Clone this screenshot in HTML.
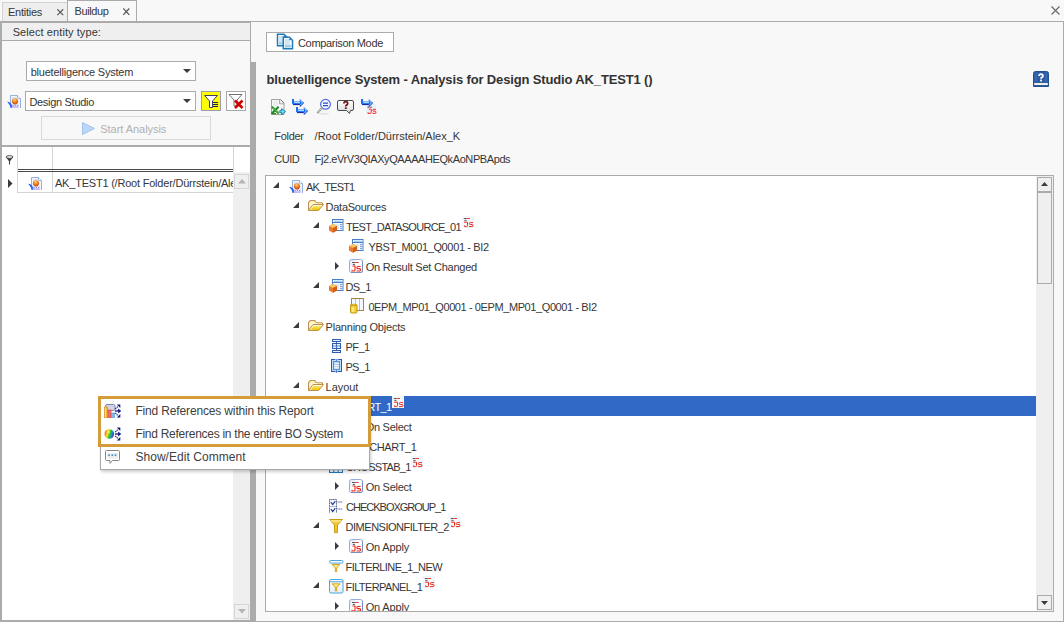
<!DOCTYPE html>
<html><head><meta charset="utf-8"><title>Buildup</title>
<style>
html,body{margin:0;padding:0;}
body{width:1064px;height:622px;overflow:hidden;position:relative;background:#f8f8f8;font-family:"Liberation Sans", sans-serif;}
div,svg{box-sizing:border-box;}
</style></head><body>
<div style="position:absolute;left:2px;top:2px;width:66px;height:20px;background:#eeeeee;box-sizing:border-box;border:1px solid #d2d2d2;"></div>
<div style="position:absolute;left:8px;top:6px;font-size:11px;line-height:13px;color:#363636;letter-spacing:-0.260px;white-space:nowrap;">Entities</div>
<svg style="position:absolute;left:57px;top:9px;" width="7" height="7" viewBox="0 0 7 7"><path d="M0.3 0.3 L6.2 6.2 M6.2 0.3 L0.3 6.2" stroke="#555" stroke-width="1.2"/></svg>
<div style="position:absolute;left:67px;top:0px;width:70px;height:22px;background:#f8f8f8;box-sizing:border-box;border:1px solid #ababab;"></div>
<div style="position:absolute;left:74.5px;top:5px;font-size:11px;line-height:13px;color:#363636;letter-spacing:-0.386px;white-space:nowrap;">Buildup</div>
<svg style="position:absolute;left:123px;top:8px;" width="7" height="8" viewBox="0 0 7 8"><path d="M0.3 0.5 L6.3 6.8 M6.3 0.5 L0.3 6.8" stroke="#555" stroke-width="1.2"/></svg>
<svg style="position:absolute;left:1051px;top:6px;" width="9" height="9" viewBox="0 0 9 9"><path d="M0.5 0.5 L8.5 8.5 M8.5 0.5 L0.5 8.5" stroke="#6a6a6a" stroke-width="1.2"/></svg>
<div style="position:absolute;left:0px;top:21px;width:1064px;height:1px;background:#ababab;"></div>
<div style="position:absolute;left:0px;top:21px;width:2px;height:601px;background:#ababab;"></div>
<div style="position:absolute;left:0px;top:22px;width:250px;height:1px;background:#ababab;"></div>
<div style="position:absolute;left:2px;top:23px;width:248px;height:17px;background:#efefef;"></div>
<div style="position:absolute;left:2px;top:40px;width:248px;height:1px;background:#ababab;"></div>
<div style="position:absolute;left:12.7px;top:26px;font-size:11px;line-height:13px;color:#363636;letter-spacing:0.077px;white-space:nowrap;">Select entity type:</div>
<div style="position:absolute;left:250px;top:21px;width:1px;height:41px;background:#ababab;"></div>
<div style="position:absolute;left:26px;top:61px;width:170px;height:20px;background:#ffffff;box-sizing:border-box;border:1px solid #ababab;"></div>
<div style="position:absolute;left:30.7px;top:66px;font-size:11px;line-height:13px;color:#363636;letter-spacing:-0.215px;white-space:nowrap;">bluetelligence System</div>
<svg style="position:absolute;left:183px;top:69px;" width="8" height="4" viewBox="0 0 8 4"><path d="M0 0 H8 L4 4 Z" fill="#3c3c3c"/></svg>
<div style="position:absolute;left:25px;top:91px;width:171px;height:20px;background:#ffffff;box-sizing:border-box;border:1px solid #ababab;"></div>
<div style="position:absolute;left:29.4px;top:96px;font-size:11px;line-height:13px;color:#363636;letter-spacing:-0.300px;white-space:nowrap;">Design Studio</div>
<svg style="position:absolute;left:183px;top:99px;" width="8" height="4" viewBox="0 0 8 4"><path d="M0 0 H8 L4 4 Z" fill="#3c3c3c"/></svg>
<svg style="position:absolute;left:7px;top:94px;" width="14" height="14" viewBox="0 0 14 14"><defs><radialGradient id="gor" cx="0.45" cy="0.3" r="0.7"><stop offset="0" stop-color="#ffd870"/><stop offset="0.45" stop-color="#f08a30"/><stop offset="1" stop-color="#c04810"/></radialGradient></defs>
<path d="M3.5 1.5 H10.5 L13.5 4.5 V14.5 H3.5 Z" fill="#f2f6fc" stroke="#98b0dc"/>
<path d="M10.5 1.5 V3.5 Q10.5 4.5 11.5 4.5 H13.5" fill="#ffffff" stroke="#98b0dc"/>
<rect x="5" y="3" width="5" height="2" fill="#dde6f6"/>
<path d="M5.5 10.8 L6.8 12.6 M6.8 10.8 L5.5 12.6 M7.8 10.8 L9.1 12.6 M9.1 10.8 L7.8 12.6 M10 10.8 L11.3 12.6 M11.3 10.8 L10 12.6" stroke="#9a7ef0" stroke-width="0.9"/>
<path d="M5 13.5 H11.5" stroke="#c8baf8" stroke-width="1"/>
<circle cx="8" cy="7.3" r="3.1" fill="url(#gor)"/>
<path d="M0.2 7.8 Q3.6 8 4.8 11 Q5.2 12.8 4.4 14.8 Q3.4 11.4 0.2 7.8 Z" fill="#1a60f0"/></svg>
<div style="position:absolute;left:201px;top:91px;width:20px;height:20px;background:#ffff00;box-sizing:border-box;border:1px solid #9a9ab0;"></div>
<svg style="position:absolute;left:201px;top:91px;" width="20" height="20" viewBox="0 0 20 20"><path d="M3.5 4.5 H16.5 L11.5 10 V16.5 H8.5 V10 Z" fill="#fff" stroke="#404060"/><path d="M12 11.5 H17 M12 13.5 H17 M12 15.5 H17" stroke="#202040" stroke-width="1.2"/></svg>
<div style="position:absolute;left:226px;top:91px;width:20px;height:20px;background:#ffffff;box-sizing:border-box;border:1px solid #a8a8a8;"></div>
<svg style="position:absolute;left:226px;top:91px;" width="20" height="20" viewBox="0 0 20 20"><path d="M3 3.5 H16 L11 9 V15 H8 V9 Z" fill="none" stroke="#707070"/><path d="M9 9.5 L16.5 17 M16.5 9.5 L9 17" stroke="#d00000" stroke-width="2.6"/></svg>
<div style="position:absolute;left:41px;top:116px;width:170px;height:24px;box-sizing:border-box;border:1px solid #d8d8d8;"></div>
<svg style="position:absolute;left:82px;top:122px;" width="13" height="13" viewBox="0 0 13 13"><path d="M0.5 0.5 L12.5 6.5 L0.5 12.5 Z" fill="#bcd6f6" stroke="#a4c2ee"/></svg>
<div style="position:absolute;left:100.3px;top:123px;font-size:11px;line-height:13px;color:#b0b0b0;letter-spacing:-0.046px;white-space:nowrap;">Start Analysis</div>
<div style="position:absolute;left:2px;top:145px;width:248px;height:2px;background:#ababab;"></div>
<div style="position:absolute;left:250px;top:62px;width:6px;height:560px;background:#ababab;"></div>
<div style="position:absolute;left:0px;top:620px;width:250px;height:2px;background:#ababab;"></div>
<div style="position:absolute;left:2px;top:147px;width:248px;height:473px;background:#ffffff;"></div>
<svg style="position:absolute;left:5px;top:155px;" width="9" height="10" viewBox="0 0 9 10"><path d="M1 2.2 Q4.5 4.5 8 2.2 L5 6.2 V9.6 H4 V6.2 Z" fill="#3a3a3a"/><ellipse cx="4.5" cy="2" rx="3.6" ry="1.3" fill="#fff" stroke="#3a3a3a" stroke-width="0.9"/></svg>
<div style="position:absolute;left:17px;top:147px;width:1px;height:46px;background:#d4d4d4;"></div>
<div style="position:absolute;left:52px;top:147px;width:1px;height:46px;background:#d4d4d4;"></div>
<div style="position:absolute;left:233px;top:147px;width:1px;height:25px;background:#d4d4d4;"></div>
<div style="position:absolute;left:18px;top:169px;width:215px;height:1px;background:#4a4a4a;"></div>
<div style="position:absolute;left:18px;top:171px;width:215px;height:1px;background:#4a4a4a;"></div>
<div style="position:absolute;left:17px;top:192px;width:216px;height:1px;background:#d4d4d4;"></div>
<svg style="position:absolute;left:8px;top:179px;" width="5" height="9" viewBox="0 0 5 9"><path d="M0 0 L4.5 4.5 L0 9 Z" fill="#3a3a3a"/></svg>
<svg style="position:absolute;left:28px;top:176px;" width="14" height="14" viewBox="0 0 14 14"><defs><radialGradient id="gor" cx="0.45" cy="0.3" r="0.7"><stop offset="0" stop-color="#ffd870"/><stop offset="0.45" stop-color="#f08a30"/><stop offset="1" stop-color="#c04810"/></radialGradient></defs>
<path d="M3.5 1.5 H10.5 L13.5 4.5 V14.5 H3.5 Z" fill="#f2f6fc" stroke="#98b0dc"/>
<path d="M10.5 1.5 V3.5 Q10.5 4.5 11.5 4.5 H13.5" fill="#ffffff" stroke="#98b0dc"/>
<rect x="5" y="3" width="5" height="2" fill="#dde6f6"/>
<path d="M5.5 10.8 L6.8 12.6 M6.8 10.8 L5.5 12.6 M7.8 10.8 L9.1 12.6 M9.1 10.8 L7.8 12.6 M10 10.8 L11.3 12.6 M11.3 10.8 L10 12.6" stroke="#9a7ef0" stroke-width="0.9"/>
<path d="M5 13.5 H11.5" stroke="#c8baf8" stroke-width="1"/>
<circle cx="8" cy="7.3" r="3.1" fill="url(#gor)"/>
<path d="M0.2 7.8 Q3.6 8 4.8 11 Q5.2 12.8 4.4 14.8 Q3.4 11.4 0.2 7.8 Z" fill="#1a60f0"/></svg>
<div style="position:absolute;left:55px;top:177px;font-size:11px;line-height:13px;color:#363636;letter-spacing:-0.213px;white-space:nowrap;width:178px;overflow:hidden;">AK_TEST1 (/Root Folder/Dürrstein/Alex_K)</div>
<div style="position:absolute;left:233px;top:172px;width:17px;height:448px;background:#efefef;"></div>
<div style="position:absolute;left:234px;top:174px;width:15px;height:15px;box-sizing:border-box;border:1px solid #d6d6d6;"></div>
<svg style="position:absolute;left:238px;top:179px;" width="8" height="5" viewBox="0 0 8 5"><path d="M0 4.5 L4 0 L8 4.5 Z" fill="#b4b4b4"/></svg>
<div style="position:absolute;left:234px;top:604px;width:15px;height:15px;box-sizing:border-box;border:1px solid #d6d6d6;"></div>
<svg style="position:absolute;left:238px;top:609px;" width="8" height="5" viewBox="0 0 8 5"><path d="M0 0 L8 0 L4 4.5 Z" fill="#b4b4b4"/></svg>
<div style="position:absolute;left:1063px;top:21px;width:1px;height:601px;background:#ababab;"></div>
<div style="position:absolute;left:256px;top:621px;width:807px;height:1px;background:#ababab;"></div>
<div style="position:absolute;left:266px;top:32px;width:128px;height:20px;background:#ffffff;box-sizing:border-box;border:1px solid #ababab;"></div>
<svg style="position:absolute;left:276px;top:33px;" width="18" height="17" viewBox="0 0 18 17"><path d="M1.5 1.2 H8 L11 4.2 V12.8 H1.5 Z" fill="#fff" stroke="#1f7ab8" stroke-width="1.5"/>
<rect x="3" y="3" width="5" height="8.5" fill="#d0e6f4"/><rect x="3" y="9" width="7" height="2.5" fill="#a8cfe6"/><circle cx="8.6" cy="3.4" r="0.9" fill="#1f7ab8"/>
<path d="M7.3 4.2 H13.5 L16.5 7.2 V15.8 H7.3 Z" fill="#fff" stroke="#1f7ab8" stroke-width="1.5"/>
<rect x="8.8" y="6" width="5" height="8.5" fill="#d0e6f4"/><rect x="8.8" y="12" width="6.5" height="2.5" fill="#a8cfe6"/><circle cx="14" cy="6.4" r="0.9" fill="#1f7ab8"/></svg>
<div style="position:absolute;left:298px;top:37px;font-size:11px;line-height:13px;color:#363636;letter-spacing:-0.325px;white-space:nowrap;">Comparison Mode</div>
<div style="position:absolute;left:266.5px;top:72px;font-size:13px;line-height:15px;color:#333333;font-weight:bold;letter-spacing:-0.144px;white-space:nowrap;">bluetelligence System - Analysis for Design Studio AK_TEST1 ()</div>
<svg style="position:absolute;left:1033px;top:71px;" width="16" height="16" viewBox="0 0 16 16"><path d="M2.5 0.5 H13.5 Q15.5 0.5 15.5 2.5 V15.5 H0.5 V2.5 Q0.5 0.5 2.5 0.5 Z" fill="#2f5ca6" stroke="#23508f"/><path d="M3 1.5 V11 M13 1.5 V11" stroke="#4a78c0" stroke-width="0.8"/><rect x="1.2" y="12" width="13.6" height="2" fill="#f2f0e4"/><path d="M6.1 4.9 Q6.1 3.2 8 3.2 Q9.9 3.2 9.9 4.9 Q9.9 6 8.6 6.5 Q8 6.8 8 7.8" fill="none" stroke="#fff" stroke-width="1.8"/><rect x="7.1" y="8.6" width="1.8" height="1.8" fill="#fff"/></svg>
<svg style="position:absolute;left:270px;top:98px;" width="17" height="18" viewBox="0 0 17 18"><path d="M1.5 1.5 H10.5 L14 5 V16.5 H1.5 Z" fill="#f8f8f8" stroke="#a0a0a0"/>
<path d="M9.5 1.5 V5.8 H14" fill="#eeeeee" stroke="#a8a8a8"/><path d="M10.5 1.5 L14 5" stroke="#707070"/>
<rect x="3" y="3" width="5" height="5" fill="#ececec"/>
<path d="M2 8.8 L8.8 15.6 M8.6 8.8 L1.8 15.6" stroke="#1c8a1c" stroke-width="2.1"/><path d="M3 9.6 L8.8 15.2" stroke="#a8e890" stroke-width="0.7"/>
<path d="M1.2 15.6 H6" stroke="#1c8a1c" stroke-width="1.2"/>
<path d="M9.8 12.6 H11.6 V10.6 L15.6 13.6 L11.6 16.6 V14.6 H9.8 Z" fill="#6ee6f8" stroke="#1470b0" stroke-width="0.9"/></svg>
<svg style="position:absolute;left:291px;top:98px;" width="18" height="17" viewBox="0 0 18 17"><path d="M1 1 H3 V3.6 H8.8 V1 L12.8 4.8 L8.8 8.6 V6.6 H2 L1 5.6 Z" fill="#1a6ef4"/><path d="M2 6.6 H8.8 M8.8 8.6 L12.8 4.8" stroke="#0624a0" stroke-width="1"/><path d="M3.2 4.6 H9" stroke="#d8f4ff" stroke-width="0.9"/><path d="M9.6 2.6 L11.4 4.8 L9.6 7" fill="none" stroke="#c8ecff" stroke-width="0.8"/><g transform="translate(4,8)"><path d="M1 1 H3 V3.6 H8.8 V1 L12.8 4.8 L8.8 8.6 V6.6 H2 L1 5.6 Z" fill="#1a6ef4"/><path d="M2 6.6 H8.8 M8.8 8.6 L12.8 4.8" stroke="#0624a0" stroke-width="1"/><path d="M3.2 4.6 H9" stroke="#d8f4ff" stroke-width="0.9"/><path d="M9.6 2.6 L11.4 4.8 L9.6 7" fill="none" stroke="#c8ecff" stroke-width="0.8"/></g></svg>
<svg style="position:absolute;left:316px;top:98px;" width="16" height="18" viewBox="0 0 16 18"><ellipse cx="8" cy="15.8" rx="5" ry="1" fill="#000" opacity="0.08"/>
<circle cx="9.5" cy="6.3" r="4.9" fill="#f6f9ff" stroke="#4a6ee4" stroke-width="1.2"/>
<path d="M7 5.2 H12 M7 7.6 H12" stroke="#2848c8" stroke-width="1.2"/>
<path d="M6 10 L1.8 14.4" stroke="#9a9a9a" stroke-width="2.1" stroke-linecap="round"/><path d="M5.6 10.4 L2 14.2" stroke="#e0e0e0" stroke-width="0.8"/></svg>
<svg style="position:absolute;left:337px;top:99px;" width="18" height="16" viewBox="0 0 18 16"><defs><linearGradient id="gq" x1="0" y1="0" x2="0" y2="1"><stop offset="0" stop-color="#ffffff"/><stop offset="1" stop-color="#d8d8d8"/></linearGradient></defs>
<path d="M2 1.5 H15 Q16.5 1.5 16.5 3 V10 Q16.5 11.5 15 11.5 H13.5 L12.5 14.5 L9.5 11.5 H2 Q0.5 11.5 0.5 10 V3 Q0.5 1.5 2 1.5 Z" fill="url(#gq)" stroke="#4a4a4a"/>
<path d="M6.9 4.6 Q6.9 2.7 8.8 2.7 Q10.7 2.7 10.7 4.5 Q10.7 5.6 9.5 6.1 Q8.8 6.4 8.8 7.5" fill="none" stroke="#701414" stroke-width="1.7"/><rect x="7.9" y="8.3" width="1.8" height="1.7" fill="#701414"/></svg>
<svg style="position:absolute;left:360px;top:98px;" width="17" height="17" viewBox="0 0 17 17"><rect x="6" y="6" width="10" height="10" fill="#e6f0fc"/>
<path d="M1 1 H3 V3.6 H8.8 V1 L12.8 4.8 L8.8 8.6 V6.6 H2 L1 5.6 Z" fill="#1a6ef4"/><path d="M2 6.6 H8.8 M8.8 8.6 L12.8 4.8" stroke="#0624a0" stroke-width="1"/><path d="M3.2 4.6 H9" stroke="#d8f4ff" stroke-width="0.9"/><path d="M9.6 2.6 L11.4 4.8 L9.6 7" fill="none" stroke="#c8ecff" stroke-width="0.8"/>
<path d="M7.5 9.2 H9.5" stroke="#303030" stroke-width="0.9"/><path d="M10 9.2 H12" stroke="#e02020" stroke-width="0.9"/>
<path d="M8.8 11.2 H11.2 V14.6 Q11.2 15.4 10.4 15.4 H8 V14.2" fill="none" stroke="#ff2418" stroke-width="0.95"/>
<path d="M16 11.4 H13.6 Q12.8 11.4 12.8 12.3 Q12.8 13.2 13.6 13.2 H15.2 Q16 13.2 16 14.3 Q16 15.4 15.2 15.4 H12.6" fill="none" stroke="#ff2418" stroke-width="0.95"/></svg>
<div style="position:absolute;left:274.3px;top:130px;font-size:11px;line-height:13px;color:#363636;letter-spacing:-0.315px;white-space:nowrap;">Folder</div>
<div style="position:absolute;left:314.6px;top:130px;font-size:11px;line-height:13px;color:#363636;letter-spacing:-0.022px;white-space:nowrap;">/Root Folder/Dürrstein/Alex_K</div>
<div style="position:absolute;left:274.3px;top:153px;font-size:11px;line-height:13px;color:#363636;letter-spacing:-0.498px;white-space:nowrap;">CUID</div>
<div style="position:absolute;left:314.6px;top:153px;font-size:11px;line-height:13px;color:#363636;letter-spacing:-0.409px;white-space:nowrap;">Fj2.eVrV3QIAXyQAAAAHEQkAoNPBApds</div>
<div style="position:absolute;left:265px;top:175px;width:789px;height:437px;background:#ffffff;box-sizing:border-box;border:1px solid #ababab;"></div>
<div style="position:absolute;left:1036px;top:176px;width:17px;height:435px;background:#efefef;"></div>
<div style="position:absolute;left:1037px;top:177px;width:15px;height:16px;box-sizing:border-box;border:1px solid #ababab;"></div>
<div style="position:absolute;left:1037px;top:191px;width:15px;height:2px;background:#ababab;"></div>
<svg style="position:absolute;left:1041px;top:182px;" width="7" height="4" viewBox="0 0 7 4"><path d="M0 4 L3.5 0 L7 4 Z" fill="#3c3c3c"/></svg>
<div style="position:absolute;left:1037px;top:192px;width:15px;height:92px;box-sizing:border-box;border:1px solid #ababab;"></div>
<div style="position:absolute;left:1037px;top:595px;width:15px;height:15px;box-sizing:border-box;border:1px solid #ababab;"></div>
<svg style="position:absolute;left:1041px;top:601px;" width="7" height="4" viewBox="0 0 7 4"><path d="M0 0 H7 L3.5 4 Z" fill="#3c3c3c"/></svg>
<div style="position:absolute;left:266px;top:396px;width:770px;height:20px;background:#3169c6;"></div>
<svg style="position:absolute;left:273px;top:182px;" width="6" height="6" viewBox="0 0 6 6"><path d="M6 0 V6 H0 Z" fill="#3c3c3c"/></svg>
<svg style="position:absolute;left:289px;top:179px;" width="14" height="14" viewBox="0 0 14 14"><defs><radialGradient id="gor" cx="0.45" cy="0.3" r="0.7"><stop offset="0" stop-color="#ffd870"/><stop offset="0.45" stop-color="#f08a30"/><stop offset="1" stop-color="#c04810"/></radialGradient></defs>
<path d="M3.5 1.5 H10.5 L13.5 4.5 V14.5 H3.5 Z" fill="#f2f6fc" stroke="#98b0dc"/>
<path d="M10.5 1.5 V3.5 Q10.5 4.5 11.5 4.5 H13.5" fill="#ffffff" stroke="#98b0dc"/>
<rect x="5" y="3" width="5" height="2" fill="#dde6f6"/>
<path d="M5.5 10.8 L6.8 12.6 M6.8 10.8 L5.5 12.6 M7.8 10.8 L9.1 12.6 M9.1 10.8 L7.8 12.6 M10 10.8 L11.3 12.6 M11.3 10.8 L10 12.6" stroke="#9a7ef0" stroke-width="0.9"/>
<path d="M5 13.5 H11.5" stroke="#c8baf8" stroke-width="1"/>
<circle cx="8" cy="7.3" r="3.1" fill="url(#gor)"/>
<path d="M0.2 7.8 Q3.6 8 4.8 11 Q5.2 12.8 4.4 14.8 Q3.4 11.4 0.2 7.8 Z" fill="#1a60f0"/></svg>
<div style="position:absolute;left:306px;top:181px;font-size:11px;line-height:13px;color:#363636;letter-spacing:-0.829px;white-space:nowrap;">AK_TEST1</div>
<svg style="position:absolute;left:293px;top:202px;" width="6" height="6" viewBox="0 0 6 6"><path d="M6 0 V6 H0 Z" fill="#3c3c3c"/></svg>
<svg style="position:absolute;left:308px;top:200px;" width="16" height="11" viewBox="0 0 16 11"><defs><linearGradient id="gf1" x1="0" y1="0" x2="0" y2="1"><stop offset="0" stop-color="#fff8d0"/><stop offset="1" stop-color="#f6d858"/></linearGradient>
<linearGradient id="gf2" x1="0" y1="0" x2="0" y2="1"><stop offset="0" stop-color="#fff6b8"/><stop offset="0.5" stop-color="#f8d838"/><stop offset="1" stop-color="#f0c008"/></linearGradient></defs>
<path d="M0.5 10.5 V2 H1.8 V0.5 H7.2 V2 H8.2 L8.8 2.8 H14.5 V4.5" fill="url(#gf1)" stroke="#c09050"/>
<path d="M1.5 10 V3.2 H7.5 L8.5 3.8 H13.5 V5" fill="#fffbe0"/>
<path d="M0.5 10.5 L5 4.5 H15.5 L10.5 10.5 Z" fill="url(#gf2)" stroke="#c09050"/>
<path d="M2.2 10 L5.6 5.5 H14" fill="none" stroke="#fffce8" stroke-width="0.9"/></svg>
<div style="position:absolute;left:325.6px;top:201px;font-size:11px;line-height:13px;color:#363636;letter-spacing:-0.272px;white-space:nowrap;">DataSources</div>
<svg style="position:absolute;left:313px;top:222px;" width="6" height="6" viewBox="0 0 6 6"><path d="M6 0 V6 H0 Z" fill="#3c3c3c"/></svg>
<svg style="position:absolute;left:329px;top:219px;" width="15" height="15" viewBox="0 0 15 15"><rect x="3.5" y="0.5" width="10.5" height="11" fill="#ffffff" stroke="#4a7cc8"/>
<path d="M3.5 3.5 H14" stroke="#4a7cc8"/>
<rect x="5" y="1.6" width="7.5" height="1.2" fill="#8cc4f4"/>
<rect x="5" y="5" width="5" height="5.5" fill="#dcebfb"/>
<circle cx="12" cy="5.5" r="0.75" fill="#3a6cc8"/><circle cx="12" cy="7.5" r="0.75" fill="#3a6cc8"/><circle cx="12" cy="9.5" r="0.75" fill="#3a6cc8"/>
<path d="M0 7 L4 5 L8 7 V11.5 L4 13.7 L0 11.5 Z" fill="#ea7a2c"/><path d="M0 7 L4 5 L8 7 L4 9 Z" fill="#fcc860"/><path d="M4 9 L8 7 V11.5 L4 13.7 Z" fill="#d4601c"/></svg>
<div style="position:absolute;left:345.9px;top:221px;font-size:11px;line-height:13px;color:#363636;letter-spacing:-0.687px;white-space:nowrap;">TEST_DATASOURCE_01</div>
<svg style="position:absolute;left:462px;top:216px;" width="12" height="12" viewBox="0 0 12 12"><rect x="0" y="0" width="12" height="12" fill="#f2f7fd"/>
<path d="M1.8 2.5 H4.5 M2.4 4.4 H4.5" stroke="#464646" stroke-width="0.9"/><path d="M4.5 2.5 H8" stroke="#e82a1a" stroke-width="0.9"/>
<path d="M2 6.2 H5.5 V9.6 Q5.5 10.6 4.5 10.6 H2.6 V9.4" fill="none" stroke="#ee2a18" stroke-width="1"/>
<path d="M11 6.6 H8.3 Q7.3 6.6 7.3 7.6 Q7.3 8.5 8.3 8.5 H10 Q11 8.5 11 9.6 Q11 10.6 10 10.6 H7" fill="none" stroke="#ee2a18" stroke-width="1"/></svg>
<svg style="position:absolute;left:349px;top:239px;" width="15" height="15" viewBox="0 0 15 15"><rect x="3.5" y="0.5" width="10.5" height="11" fill="#ffffff" stroke="#4a7cc8"/>
<path d="M3.5 3.5 H14" stroke="#4a7cc8"/>
<rect x="5" y="1.6" width="7.5" height="1.2" fill="#8cc4f4"/>
<rect x="5" y="5" width="5" height="5.5" fill="#dcebfb"/>
<circle cx="12" cy="5.5" r="0.75" fill="#3a6cc8"/><circle cx="12" cy="7.5" r="0.75" fill="#3a6cc8"/><circle cx="12" cy="9.5" r="0.75" fill="#3a6cc8"/>
<path d="M0 7 L4 5 L8 7 V11.5 L4 13.7 L0 11.5 Z" fill="#ea7a2c"/><path d="M0 7 L4 5 L8 7 L4 9 Z" fill="#fcc860"/><path d="M4 9 L8 7 V11.5 L4 13.7 Z" fill="#d4601c"/></svg>
<div style="position:absolute;left:368.5px;top:241px;font-size:11px;line-height:13px;color:#363636;letter-spacing:-0.357px;white-space:nowrap;">YBST_M001_Q0001 - BI2</div>
<svg style="position:absolute;left:335px;top:262px;" width="5" height="8" viewBox="0 0 5 8"><path d="M0 0 L4 4 L0 8 Z" fill="#3c3c3c"/></svg>
<svg style="position:absolute;left:349px;top:259px;" width="14" height="14" viewBox="0 0 14 14"><defs><linearGradient id="gjs" x1="0" y1="0" x2="1" y2="1"><stop offset="0" stop-color="#dde8fa"/><stop offset="0.5" stop-color="#ffffff"/><stop offset="1" stop-color="#f4f8ff"/></linearGradient></defs>
<rect x="0.5" y="0.5" width="13" height="13" rx="2" fill="url(#gjs)" stroke="#94acdf"/><path d="M13.5 2 V12 Q13.5 13.5 12 13.5 H2" fill="none" stroke="#7088c0" stroke-width="0.8"/>
<path d="M3 3.5 H6.3" stroke="#484848" stroke-width="0.9"/><path d="M6.3 3.5 H9.8" stroke="#e82a1a" stroke-width="0.9"/><path d="M3.8 5.4 H6" stroke="#484848" stroke-width="0.9"/>
<path d="M3.5 7 H6 V11 Q6 12 5 12 H3 V10.8" fill="none" stroke="#ee2a18" stroke-width="1.1"/>
<path d="M11.6 7.5 H8.8 Q7.8 7.5 7.8 8.6 Q7.8 9.6 8.8 9.6 H10.6 Q11.6 9.6 11.6 10.8 Q11.6 12 10.6 12 H7.6" fill="none" stroke="#ee2a18" stroke-width="1.1"/></svg>
<div style="position:absolute;left:365.7px;top:261px;font-size:11px;line-height:13px;color:#363636;letter-spacing:-0.233px;white-space:nowrap;">On Result Set Changed</div>
<svg style="position:absolute;left:313px;top:282px;" width="6" height="6" viewBox="0 0 6 6"><path d="M6 0 V6 H0 Z" fill="#3c3c3c"/></svg>
<svg style="position:absolute;left:329px;top:279px;" width="15" height="15" viewBox="0 0 15 15"><rect x="3.5" y="0.5" width="10.5" height="11" fill="#ffffff" stroke="#4a7cc8"/>
<path d="M3.5 3.5 H14" stroke="#4a7cc8"/>
<rect x="5" y="1.6" width="7.5" height="1.2" fill="#8cc4f4"/>
<rect x="5" y="5" width="5" height="5.5" fill="#dcebfb"/>
<circle cx="12" cy="5.5" r="0.75" fill="#3a6cc8"/><circle cx="12" cy="7.5" r="0.75" fill="#3a6cc8"/><circle cx="12" cy="9.5" r="0.75" fill="#3a6cc8"/>
<path d="M0 7 L4 5 L8 7 V11.5 L4 13.7 L0 11.5 Z" fill="#ea7a2c"/><path d="M0 7 L4 5 L8 7 L4 9 Z" fill="#fcc860"/><path d="M4 9 L8 7 V11.5 L4 13.7 Z" fill="#d4601c"/></svg>
<div style="position:absolute;left:345.4px;top:281px;font-size:11px;line-height:13px;color:#363636;letter-spacing:-0.533px;white-space:nowrap;">DS_1</div>
<svg style="position:absolute;left:350px;top:298px;" width="15" height="16" viewBox="0 0 15 16"><rect x="1.5" y="0.5" width="12" height="12" fill="#eef4fc" stroke="#a88448"/>
<path d="M2 3 H13 M2 5 H13 M2 7 H13 M2 9 H13 M2 11 H13" stroke="#ffffff" stroke-width="0.8"/>
<path d="M5.5 1 V12 M9.5 1 V12" stroke="#c8b898" stroke-width="0.9"/>
<path d="M0.5 7 V14 Q0.5 15 1.5 15 H6 Q7 15 7 14 V7 Z" fill="#f4d030" stroke="#c49a18"/><path d="M0.5 7 Q3.7 5.2 7 7 Q3.7 8.6 0.5 7 Z" fill="#f8e26a" stroke="#c49a18" stroke-width="0.8"/><rect x="2" y="9" width="2" height="5" fill="#fff2a0" opacity="0.7"/></svg>
<div style="position:absolute;left:368.4px;top:301px;font-size:11px;line-height:13px;color:#363636;letter-spacing:-0.404px;white-space:nowrap;">0EPM_MP01_Q0001 - 0EPM_MP01_Q0001 - BI2</div>
<svg style="position:absolute;left:293px;top:322px;" width="6" height="6" viewBox="0 0 6 6"><path d="M6 0 V6 H0 Z" fill="#3c3c3c"/></svg>
<svg style="position:absolute;left:308px;top:320px;" width="16" height="11" viewBox="0 0 16 11"><defs><linearGradient id="gf1" x1="0" y1="0" x2="0" y2="1"><stop offset="0" stop-color="#fff8d0"/><stop offset="1" stop-color="#f6d858"/></linearGradient>
<linearGradient id="gf2" x1="0" y1="0" x2="0" y2="1"><stop offset="0" stop-color="#fff6b8"/><stop offset="0.5" stop-color="#f8d838"/><stop offset="1" stop-color="#f0c008"/></linearGradient></defs>
<path d="M0.5 10.5 V2 H1.8 V0.5 H7.2 V2 H8.2 L8.8 2.8 H14.5 V4.5" fill="url(#gf1)" stroke="#c09050"/>
<path d="M1.5 10 V3.2 H7.5 L8.5 3.8 H13.5 V5" fill="#fffbe0"/>
<path d="M0.5 10.5 L5 4.5 H15.5 L10.5 10.5 Z" fill="url(#gf2)" stroke="#c09050"/>
<path d="M2.2 10 L5.6 5.5 H14" fill="none" stroke="#fffce8" stroke-width="0.9"/></svg>
<div style="position:absolute;left:325.6px;top:321px;font-size:11px;line-height:13px;color:#363636;letter-spacing:-0.217px;white-space:nowrap;">Planning Objects</div>
<svg style="position:absolute;left:332px;top:339px;" width="10" height="15" viewBox="0 0 10 15"><rect x="0.5" y="0.5" width="8" height="2" fill="#e8f0fc" stroke="#2e5cae"/>
<path d="M4.5 3 V4 M4.5 10 V11" stroke="#2e5cae"/>
<rect x="0.5" y="4.5" width="8" height="5" fill="#d4e6fa" stroke="#2e5cae"/>
<path d="M0.5 7 H8.5" stroke="#2e5cae" stroke-width="0.8"/><path d="M4.5 4.5 V9.5" stroke="#2e5cae" stroke-width="0.8"/>
<path d="M1.5 5.8 H3.6 M5.4 5.8 H7.5 M1.5 8.3 H3.6 M5.4 8.3 H7.5" stroke="#ffffff" stroke-width="0.9"/>
<rect x="0.5" y="11.5" width="8" height="2" fill="#e8f0fc" stroke="#2e5cae"/></svg>
<div style="position:absolute;left:345.4px;top:341px;font-size:11px;line-height:13px;color:#363636;letter-spacing:-0.524px;white-space:nowrap;">PF_1</div>
<svg style="position:absolute;left:331px;top:359px;" width="11" height="15" viewBox="0 0 11 15"><rect x="1" y="1" width="9" height="11" fill="#bfe0fb"/>
<rect x="0.5" y="0.5" width="10" height="12" fill="none" stroke="#2a5aa8"/>
<path d="M3.8 0.5 H7.2 M3.8 12.5 H7.2" stroke="#8ab0ec"/>
<rect x="2.5" y="2.5" width="6" height="8.2" fill="#a4c6ee" stroke="#4e80cc" stroke-width="0.8"/>
<path d="M3.3 4.3 H7.8 M3.3 6.6 H7.8 M3.3 8.9 H7.8" stroke="#ffffff" stroke-width="1.1"/>
<path d="M5.5 0.5 V2.5 M5.5 10.7 V12.8" stroke="#4e80cc" stroke-width="0.9"/>
<path d="M4.4 12.6 L5.5 14.2 L6.6 12.6 Z" fill="#4a6ad0"/></svg>
<div style="position:absolute;left:345.4px;top:361px;font-size:11px;line-height:13px;color:#363636;letter-spacing:-0.680px;white-space:nowrap;">PS_1</div>
<svg style="position:absolute;left:293px;top:382px;" width="6" height="6" viewBox="0 0 6 6"><path d="M6 0 V6 H0 Z" fill="#3c3c3c"/></svg>
<svg style="position:absolute;left:308px;top:380px;" width="16" height="11" viewBox="0 0 16 11"><defs><linearGradient id="gf1" x1="0" y1="0" x2="0" y2="1"><stop offset="0" stop-color="#fff8d0"/><stop offset="1" stop-color="#f6d858"/></linearGradient>
<linearGradient id="gf2" x1="0" y1="0" x2="0" y2="1"><stop offset="0" stop-color="#fff6b8"/><stop offset="0.5" stop-color="#f8d838"/><stop offset="1" stop-color="#f0c008"/></linearGradient></defs>
<path d="M0.5 10.5 V2 H1.8 V0.5 H7.2 V2 H8.2 L8.8 2.8 H14.5 V4.5" fill="url(#gf1)" stroke="#c09050"/>
<path d="M1.5 10 V3.2 H7.5 L8.5 3.8 H13.5 V5" fill="#fffbe0"/>
<path d="M0.5 10.5 L5 4.5 H15.5 L10.5 10.5 Z" fill="url(#gf2)" stroke="#c09050"/>
<path d="M2.2 10 L5.6 5.5 H14" fill="none" stroke="#fffce8" stroke-width="0.9"/></svg>
<div style="position:absolute;left:325.6px;top:381px;font-size:11px;line-height:13px;color:#363636;letter-spacing:-0.039px;white-space:nowrap;">Layout</div>
<svg style="position:absolute;left:313px;top:402px;" width="6" height="6" viewBox="0 0 6 6"><path d="M6 0 V6 H0 Z" fill="#ffffff"/></svg>
<svg style="position:absolute;left:329px;top:399px;" width="14" height="13" viewBox="0 0 14 13"><rect x="0.5" y="0.5" width="13" height="12" fill="#fff" stroke="#7a90b0"/>
<rect x="3" y="6" width="2" height="5" fill="#e05020"/><rect x="6" y="3" width="2" height="8" fill="#30a040"/><rect x="9" y="5" width="2" height="6" fill="#3070d0"/></svg>
<div style="position:absolute;left:346px;top:401px;font-size:11px;line-height:13px;color:#ffffff;letter-spacing:-0.634px;white-space:nowrap;">CHART_1</div>
<svg style="position:absolute;left:392px;top:396px;" width="12" height="12" viewBox="0 0 12 12"><rect x="0" y="0" width="12" height="12" fill="#f2f7fd"/>
<path d="M1.8 2.5 H4.5 M2.4 4.4 H4.5" stroke="#464646" stroke-width="0.9"/><path d="M4.5 2.5 H8" stroke="#e82a1a" stroke-width="0.9"/>
<path d="M2 6.2 H5.5 V9.6 Q5.5 10.6 4.5 10.6 H2.6 V9.4" fill="none" stroke="#ee2a18" stroke-width="1"/>
<path d="M11 6.6 H8.3 Q7.3 6.6 7.3 7.6 Q7.3 8.5 8.3 8.5 H10 Q11 8.5 11 9.6 Q11 10.6 10 10.6 H7" fill="none" stroke="#ee2a18" stroke-width="1"/></svg>
<svg style="position:absolute;left:335px;top:422px;" width="5" height="8" viewBox="0 0 5 8"><path d="M0 0 L4 4 L0 8 Z" fill="#3c3c3c"/></svg>
<svg style="position:absolute;left:349px;top:419px;" width="14" height="14" viewBox="0 0 14 14"><defs><linearGradient id="gjs" x1="0" y1="0" x2="1" y2="1"><stop offset="0" stop-color="#dde8fa"/><stop offset="0.5" stop-color="#ffffff"/><stop offset="1" stop-color="#f4f8ff"/></linearGradient></defs>
<rect x="0.5" y="0.5" width="13" height="13" rx="2" fill="url(#gjs)" stroke="#94acdf"/><path d="M13.5 2 V12 Q13.5 13.5 12 13.5 H2" fill="none" stroke="#7088c0" stroke-width="0.8"/>
<path d="M3 3.5 H6.3" stroke="#484848" stroke-width="0.9"/><path d="M6.3 3.5 H9.8" stroke="#e82a1a" stroke-width="0.9"/><path d="M3.8 5.4 H6" stroke="#484848" stroke-width="0.9"/>
<path d="M3.5 7 H6 V11 Q6 12 5 12 H3 V10.8" fill="none" stroke="#ee2a18" stroke-width="1.1"/>
<path d="M11.6 7.5 H8.8 Q7.8 7.5 7.8 8.6 Q7.8 9.6 8.8 9.6 H10.6 Q11.6 9.6 11.6 10.8 Q11.6 12 10.6 12 H7.6" fill="none" stroke="#ee2a18" stroke-width="1.1"/></svg>
<div style="position:absolute;left:365.7px;top:421px;font-size:11px;line-height:13px;color:#363636;letter-spacing:-0.279px;white-space:nowrap;">On Select</div>
<svg style="position:absolute;left:329px;top:439px;" width="14" height="13" viewBox="0 0 14 13"><rect x="0.5" y="0.5" width="13" height="12" fill="#fff" stroke="#7a90b0"/>
<rect x="3" y="6" width="2" height="5" fill="#e05020"/><rect x="6" y="3" width="2" height="8" fill="#30a040"/><rect x="9" y="5" width="2" height="6" fill="#3070d0"/></svg>
<div style="position:absolute;left:347px;top:441px;font-size:11px;line-height:13px;color:#363636;letter-spacing:-0.398px;white-space:nowrap;">PIE_CHART_1</div>
<svg style="position:absolute;left:313px;top:462px;" width="6" height="6" viewBox="0 0 6 6"><path d="M6 0 V6 H0 Z" fill="#3c3c3c"/></svg>
<svg style="position:absolute;left:329px;top:460px;" width="14" height="13" viewBox="0 0 14 13"><rect x="0.5" y="0.5" width="13" height="12" fill="#e8f2fa" stroke="#2a7ab8"/>
<path d="M0.5 4 H13.5 M4.8 0.5 V12.5 M9.2 0.5 V12.5" stroke="#2a7ab8"/><path d="M1.5 9.5 H4 M5.8 9.5 H8.2 M10.2 9.5 H12.6" stroke="#ffffff"/></svg>
<div style="position:absolute;left:345.8px;top:461px;font-size:11px;line-height:13px;color:#363636;letter-spacing:-0.704px;white-space:nowrap;">CROSSTAB_1</div>
<svg style="position:absolute;left:411px;top:456px;" width="12" height="12" viewBox="0 0 12 12"><rect x="0" y="0" width="12" height="12" fill="#f2f7fd"/>
<path d="M1.8 2.5 H4.5 M2.4 4.4 H4.5" stroke="#464646" stroke-width="0.9"/><path d="M4.5 2.5 H8" stroke="#e82a1a" stroke-width="0.9"/>
<path d="M2 6.2 H5.5 V9.6 Q5.5 10.6 4.5 10.6 H2.6 V9.4" fill="none" stroke="#ee2a18" stroke-width="1"/>
<path d="M11 6.6 H8.3 Q7.3 6.6 7.3 7.6 Q7.3 8.5 8.3 8.5 H10 Q11 8.5 11 9.6 Q11 10.6 10 10.6 H7" fill="none" stroke="#ee2a18" stroke-width="1"/></svg>
<svg style="position:absolute;left:335px;top:482px;" width="5" height="8" viewBox="0 0 5 8"><path d="M0 0 L4 4 L0 8 Z" fill="#3c3c3c"/></svg>
<svg style="position:absolute;left:349px;top:479px;" width="14" height="14" viewBox="0 0 14 14"><defs><linearGradient id="gjs" x1="0" y1="0" x2="1" y2="1"><stop offset="0" stop-color="#dde8fa"/><stop offset="0.5" stop-color="#ffffff"/><stop offset="1" stop-color="#f4f8ff"/></linearGradient></defs>
<rect x="0.5" y="0.5" width="13" height="13" rx="2" fill="url(#gjs)" stroke="#94acdf"/><path d="M13.5 2 V12 Q13.5 13.5 12 13.5 H2" fill="none" stroke="#7088c0" stroke-width="0.8"/>
<path d="M3 3.5 H6.3" stroke="#484848" stroke-width="0.9"/><path d="M6.3 3.5 H9.8" stroke="#e82a1a" stroke-width="0.9"/><path d="M3.8 5.4 H6" stroke="#484848" stroke-width="0.9"/>
<path d="M3.5 7 H6 V11 Q6 12 5 12 H3 V10.8" fill="none" stroke="#ee2a18" stroke-width="1.1"/>
<path d="M11.6 7.5 H8.8 Q7.8 7.5 7.8 8.6 Q7.8 9.6 8.8 9.6 H10.6 Q11.6 9.6 11.6 10.8 Q11.6 12 10.6 12 H7.6" fill="none" stroke="#ee2a18" stroke-width="1.1"/></svg>
<div style="position:absolute;left:365.7px;top:481px;font-size:11px;line-height:13px;color:#363636;letter-spacing:-0.279px;white-space:nowrap;">On Select</div>
<svg style="position:absolute;left:329px;top:499px;" width="14" height="14" viewBox="0 0 14 14"><rect x="0.5" y="0.5" width="7" height="14" fill="#f8fafc" stroke="#506088" stroke-dasharray="1.2 0.5"/>
<path d="M1 7.5 H7.5" stroke="#8090b0" stroke-width="0.6"/>
<path d="M1.8 3.2 L3.8 5.6 L6.3 2.2 M1.8 10.2 L3.8 12.6 L6.3 9.2" fill="none" stroke="#1e3a96" stroke-width="1.2"/>
<path d="M8.5 3 H13.5 M8.5 10 H13.5" stroke="#5a6a9a" stroke-dasharray="1.2 0.4"/></svg>
<div style="position:absolute;left:346.1px;top:501px;font-size:11px;line-height:13px;color:#363636;letter-spacing:-1.007px;white-space:nowrap;">CHECKBOXGROUP_1</div>
<svg style="position:absolute;left:313px;top:522px;" width="6" height="6" viewBox="0 0 6 6"><path d="M6 0 V6 H0 Z" fill="#3c3c3c"/></svg>
<svg style="position:absolute;left:329px;top:519px;" width="14" height="14" viewBox="0 0 14 14"><path d="M0.5 0.5 H13.5 L8.5 6 V13.5 H5.5 V6 Z" fill="#f4c830" stroke="#c89a10"/><path d="M1 1 H13 L11 3 H3 Z" fill="#fce080"/></svg>
<div style="position:absolute;left:345.6px;top:521px;font-size:11px;line-height:13px;color:#363636;letter-spacing:-0.486px;white-space:nowrap;">DIMENSIONFILTER_2</div>
<svg style="position:absolute;left:449px;top:516px;" width="12" height="12" viewBox="0 0 12 12"><rect x="0" y="0" width="12" height="12" fill="#f2f7fd"/>
<path d="M1.8 2.5 H4.5 M2.4 4.4 H4.5" stroke="#464646" stroke-width="0.9"/><path d="M4.5 2.5 H8" stroke="#e82a1a" stroke-width="0.9"/>
<path d="M2 6.2 H5.5 V9.6 Q5.5 10.6 4.5 10.6 H2.6 V9.4" fill="none" stroke="#ee2a18" stroke-width="1"/>
<path d="M11 6.6 H8.3 Q7.3 6.6 7.3 7.6 Q7.3 8.5 8.3 8.5 H10 Q11 8.5 11 9.6 Q11 10.6 10 10.6 H7" fill="none" stroke="#ee2a18" stroke-width="1"/></svg>
<svg style="position:absolute;left:335px;top:542px;" width="5" height="8" viewBox="0 0 5 8"><path d="M0 0 L4 4 L0 8 Z" fill="#3c3c3c"/></svg>
<svg style="position:absolute;left:349px;top:539px;" width="14" height="14" viewBox="0 0 14 14"><defs><linearGradient id="gjs" x1="0" y1="0" x2="1" y2="1"><stop offset="0" stop-color="#dde8fa"/><stop offset="0.5" stop-color="#ffffff"/><stop offset="1" stop-color="#f4f8ff"/></linearGradient></defs>
<rect x="0.5" y="0.5" width="13" height="13" rx="2" fill="url(#gjs)" stroke="#94acdf"/><path d="M13.5 2 V12 Q13.5 13.5 12 13.5 H2" fill="none" stroke="#7088c0" stroke-width="0.8"/>
<path d="M3 3.5 H6.3" stroke="#484848" stroke-width="0.9"/><path d="M6.3 3.5 H9.8" stroke="#e82a1a" stroke-width="0.9"/><path d="M3.8 5.4 H6" stroke="#484848" stroke-width="0.9"/>
<path d="M3.5 7 H6 V11 Q6 12 5 12 H3 V10.8" fill="none" stroke="#ee2a18" stroke-width="1.1"/>
<path d="M11.6 7.5 H8.8 Q7.8 7.5 7.8 8.6 Q7.8 9.6 8.8 9.6 H10.6 Q11.6 9.6 11.6 10.8 Q11.6 12 10.6 12 H7.6" fill="none" stroke="#ee2a18" stroke-width="1.1"/></svg>
<div style="position:absolute;left:365.7px;top:541px;font-size:11px;line-height:13px;color:#363636;letter-spacing:-0.155px;white-space:nowrap;">On Apply</div>
<svg style="position:absolute;left:329px;top:560px;" width="15" height="13" viewBox="0 0 15 13"><rect x="0.5" y="0.5" width="13.5" height="2.6" rx="1.3" fill="#ffffff" stroke="#4aa4dc"/>
<path d="M3 4.5 H11 L7.7 7.8 V11.8 H6.3 V7.8 Z" fill="#f6c838" stroke="#d29c12" stroke-width="0.8"/><path d="M4.5 5.2 H9.5 L7 7.4 Z" fill="#fff0a0"/></svg>
<div style="position:absolute;left:345.6px;top:561px;font-size:11px;line-height:13px;color:#363636;letter-spacing:-0.566px;white-space:nowrap;">FILTERLINE_1_NEW</div>
<svg style="position:absolute;left:313px;top:582px;" width="6" height="6" viewBox="0 0 6 6"><path d="M6 0 V6 H0 Z" fill="#3c3c3c"/></svg>
<svg style="position:absolute;left:329px;top:579px;" width="15" height="15" viewBox="0 0 15 15"><defs><linearGradient id="gfp" x1="0" y1="0" x2="0" y2="1"><stop offset="0" stop-color="#ffffff"/><stop offset="1" stop-color="#e2eef9"/></linearGradient></defs>
<rect x="0.5" y="0.5" width="13.5" height="13.5" rx="1.5" fill="url(#gfp)" stroke="#4aa4dc"/><path d="M0.5 2.8 H14" stroke="#4aa4dc"/>
<path d="M3 4.8 H11 L7.7 8.2 V12 H6.3 V8.2 Z" fill="#f6c838" stroke="#d29c12" stroke-width="0.8"/><path d="M4.5 5.5 H9.5 L7 7.8 Z" fill="#fff0a0"/></svg>
<div style="position:absolute;left:345.6px;top:581px;font-size:11px;line-height:13px;color:#363636;letter-spacing:-0.606px;white-space:nowrap;">FILTERPANEL_1</div>
<svg style="position:absolute;left:423px;top:576px;" width="12" height="12" viewBox="0 0 12 12"><rect x="0" y="0" width="12" height="12" fill="#f2f7fd"/>
<path d="M1.8 2.5 H4.5 M2.4 4.4 H4.5" stroke="#464646" stroke-width="0.9"/><path d="M4.5 2.5 H8" stroke="#e82a1a" stroke-width="0.9"/>
<path d="M2 6.2 H5.5 V9.6 Q5.5 10.6 4.5 10.6 H2.6 V9.4" fill="none" stroke="#ee2a18" stroke-width="1"/>
<path d="M11 6.6 H8.3 Q7.3 6.6 7.3 7.6 Q7.3 8.5 8.3 8.5 H10 Q11 8.5 11 9.6 Q11 10.6 10 10.6 H7" fill="none" stroke="#ee2a18" stroke-width="1"/></svg>
<svg style="position:absolute;left:335px;top:602px;" width="5" height="8" viewBox="0 0 5 8"><path d="M0 0 L4 4 L0 8 Z" fill="#3c3c3c"/></svg>
<svg style="position:absolute;left:349px;top:599px;" width="14" height="14" viewBox="0 0 14 14"><defs><linearGradient id="gjs" x1="0" y1="0" x2="1" y2="1"><stop offset="0" stop-color="#dde8fa"/><stop offset="0.5" stop-color="#ffffff"/><stop offset="1" stop-color="#f4f8ff"/></linearGradient></defs>
<rect x="0.5" y="0.5" width="13" height="13" rx="2" fill="url(#gjs)" stroke="#94acdf"/><path d="M13.5 2 V12 Q13.5 13.5 12 13.5 H2" fill="none" stroke="#7088c0" stroke-width="0.8"/>
<path d="M3 3.5 H6.3" stroke="#484848" stroke-width="0.9"/><path d="M6.3 3.5 H9.8" stroke="#e82a1a" stroke-width="0.9"/><path d="M3.8 5.4 H6" stroke="#484848" stroke-width="0.9"/>
<path d="M3.5 7 H6 V11 Q6 12 5 12 H3 V10.8" fill="none" stroke="#ee2a18" stroke-width="1.1"/>
<path d="M11.6 7.5 H8.8 Q7.8 7.5 7.8 8.6 Q7.8 9.6 8.8 9.6 H10.6 Q11.6 9.6 11.6 10.8 Q11.6 12 10.6 12 H7.6" fill="none" stroke="#ee2a18" stroke-width="1.1"/></svg>
<div style="position:absolute;left:365.7px;top:601px;font-size:11px;line-height:13px;color:#363636;letter-spacing:-0.155px;white-space:nowrap;">On Apply</div>
<div style="position:absolute;left:256px;top:612px;width:807px;height:9px;background:#f8f8f8;"></div>
<div style="position:absolute;left:265px;top:611px;width:789px;height:1px;background:#ababab;"></div>
<div style="position:absolute;left:1036px;top:596px;width:17px;height:15px;background:#efefef;"></div>
<div style="position:absolute;left:1037px;top:595px;width:15px;height:15px;box-sizing:border-box;border:1px solid #ababab;"></div>
<svg style="position:absolute;left:1041px;top:601px;" width="7" height="4" viewBox="0 0 7 4"><path d="M0 0 H7 L3.5 4 Z" fill="#3c3c3c"/></svg>
<div style="position:absolute;left:100px;top:397px;width:270px;height:73px;background:#fff;border:1px solid #a8a8a8;box-shadow:1px 2px 3px rgba(0,0,0,0.2)"></div>
<div style="position:absolute;left:98px;top:396px;width:273px;height:51px;box-sizing:border-box;border:3px solid #d39c38;"></div>
<svg style="position:absolute;left:104px;top:404px;" width="18" height="14" viewBox="0 0 18 14"><rect x="1.5" y="0.5" width="9.5" height="6" rx="1.5" fill="#d0d4e6" stroke="#8088aa"/>
<rect x="0.5" y="3" width="3" height="11" fill="#f4b030" stroke="#d08010" stroke-width="0.6"/><rect x="1.2" y="3.5" width="0.9" height="10" fill="#fce8a0"/>
<rect x="4" y="6" width="3" height="8" fill="#f07070" stroke="#d04848" stroke-width="0.6"/>
<rect x="7.5" y="9" width="3" height="5" fill="#80bce8" stroke="#4a90c8" stroke-width="0.6"/><path d="M11.3 5 L14 2.3 M11.3 9 L14 11.7" stroke="#10187a" stroke-width="1.2" stroke-dasharray="1.3 0.7"/>
<path d="M12.8 0.6 H16.3 V4.1 Z M12.8 13.4 H16.3 V9.9 Z" fill="#10187a"/>
<path d="M11 7 H15" stroke="#10187a" stroke-width="1.3"/><path d="M14.2 4.4 L17.2 7 L14.2 9.6 Z" fill="#10187a"/></svg>
<svg style="position:absolute;left:104px;top:427px;" width="18" height="14" viewBox="0 0 18 14"><defs><linearGradient id="grb" x1="0" y1="0" x2="1" y2="0.3"><stop offset="0" stop-color="#e81818"/><stop offset="0.25" stop-color="#f8a010"/><stop offset="0.45" stop-color="#f0e820"/><stop offset="0.65" stop-color="#28c028"/><stop offset="0.85" stop-color="#1890e8"/><stop offset="1" stop-color="#6038b0"/></linearGradient></defs>
<circle cx="5.3" cy="7" r="4.8" fill="url(#grb)"/><ellipse cx="4.5" cy="5" rx="2" ry="1.5" fill="#fff" opacity="0.35"/><path d="M11.3 5 L14 2.3 M11.3 9 L14 11.7" stroke="#10187a" stroke-width="1.2" stroke-dasharray="1.3 0.7"/>
<path d="M12.8 0.6 H16.3 V4.1 Z M12.8 13.4 H16.3 V9.9 Z" fill="#10187a"/>
<path d="M11 7 H15" stroke="#10187a" stroke-width="1.3"/><path d="M14.2 4.4 L17.2 7 L14.2 9.6 Z" fill="#10187a"/></svg>
<svg style="position:absolute;left:105px;top:450px;" width="16" height="14" viewBox="0 0 16 14"><path d="M1.5 0.5 H13.5 Q14.5 0.5 14.5 1.5 V9.5 Q14.5 10.5 13.5 10.5 H7.5 L5 13.3 V10.5 H1.5 Q0.5 10.5 0.5 9.5 V1.5 Q0.5 0.5 1.5 0.5 Z" fill="#ffffff" stroke="#858585"/>
<rect x="2" y="3" width="11" height="5.5" fill="#ececec"/>
<circle cx="4" cy="5.2" r="0.9" fill="#3a90c0"/><circle cx="7.3" cy="5.2" r="0.9" fill="#3a90c0"/><circle cx="10.5" cy="5.2" r="0.9" fill="#3a90c0"/></svg>
<div style="position:absolute;left:135.4px;top:404px;font-size:12px;line-height:14px;color:#404040;letter-spacing:-0.151px;white-space:nowrap;">Find References within this Report</div>
<div style="position:absolute;left:135.4px;top:427px;font-size:12px;line-height:14px;color:#404040;letter-spacing:-0.269px;white-space:nowrap;">Find References in the entire BO System</div>
<div style="position:absolute;left:135.4px;top:450px;font-size:12px;line-height:14px;color:#404040;letter-spacing:0.048px;white-space:nowrap;">Show/Edit Comment</div>
</body></html>
